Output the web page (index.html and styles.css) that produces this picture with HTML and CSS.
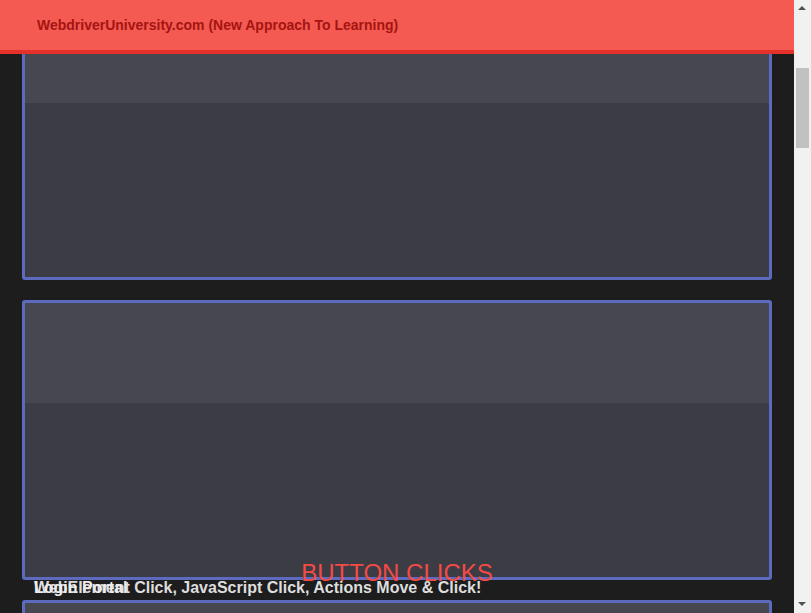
FILE: index.html
```html
<!DOCTYPE html>
<html>
<head>
<meta charset="utf-8">
<link rel="stylesheet" href="styles.css">
</head>
<body>
<div class="app">
  <div class="viewport">
    <div class="topbar"><span class="brand">WebdriverUniversity.com (New Approach To Learning)</span></div>
    <div class="cards">
      <div class="card"><div class="card-head"></div><div class="card-body"></div></div>
      <div class="card">
        <div class="card-head"></div><div class="card-body"></div>
        <div class="overlay-title">BUTTON CLICKS</div>
        <div class="overlay-sub">WebElement Click, JavaScript Click, Actions Move &amp; Click!</div>
        <div class="overlay-sub ghost">Login Portal</div>
      </div>
      <div class="card"><div class="card-head"></div><div class="card-body"></div></div>
    </div>
  </div>
  <div class="scrollbar">
    <div class="arrow up"></div>
    <div class="track"><div class="thumb"></div></div>
    <div class="arrow down"></div>
  </div>
</div>
</body>
</html>
```
FILE: styles.css
```css
html, body { margin: 0; padding: 0; overflow: hidden; }
body { background: #1d1d1d; font-family: "Liberation Sans", Arial, sans-serif; }
.app { display: flex; width: 811px; height: 613px; }
.viewport { position: relative; flex: 1; height: 613px; overflow: hidden; }
.topbar {
  position: absolute; top: 0; left: 0; right: 0;
  height: 50px; background: #f45a52; border-bottom: 4px solid #e5312a;
  display: flex; align-items: center; padding-left: 37px; box-sizing: content-box; z-index: 2;
}
.brand { color: #a51411; font-weight: bold; font-size: 14px; margin-top: 0px; }
.cards { display: flex; flex-direction: column; gap: 20px; padding: 0 22px; }
.card {
  position: relative; height: 274px; border: 3px solid #5c6bc0; border-radius: 3px;
  display: flex; flex-direction: column; background: #3c3c45;
}
.card-head { height: 100px; background: #47474f; }
.card-body { flex: 1; background: #3c3c45; }
.overlay-title {
  position: absolute; left: 0; right: 0; top: 256px; text-align: center;
  color: #f44a45; font-size: 24px; line-height: 28px; z-index: 1;
}
.overlay-sub {
  position: absolute; left: 9px; top: 275px; white-space: nowrap;
  color: #dedede; font-weight: bold; font-size: 16px; line-height: 20px; z-index: 1;
}
.overlay-sub.ghost { color: #ececec; }
.scrollbar { width: 17px; background: #f1f1f1; display: flex; flex-direction: column; }
.arrow { height: 17px; position: relative; }
.arrow::after {
  content: ""; position: absolute; left: 4px; width: 0; height: 0;
  border-left: 4px solid transparent; border-right: 4px solid transparent;
}
.arrow.up::after { top: 6px; border-bottom: 4px solid #505050; }
.arrow.down::after { top: 6px; border-top: 4px solid #505050; }
.track { flex: 1; padding-top: 51px; }
.thumb { width: 13px; height: 80px; margin-left: 2px; background: #c1c1c1; }
```
